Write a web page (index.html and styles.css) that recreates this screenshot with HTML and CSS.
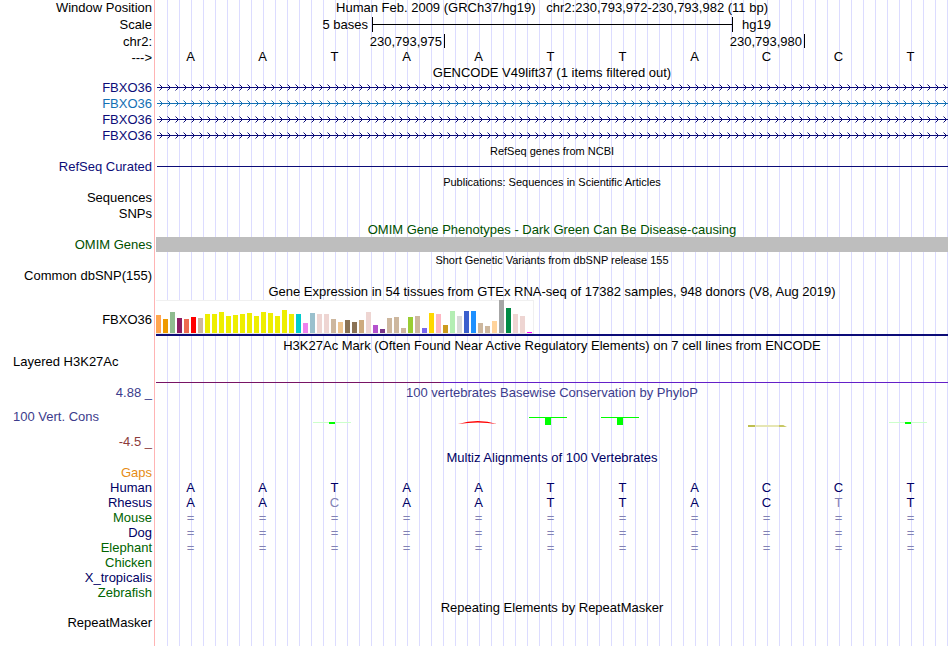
FILE: index.html
```html
<!DOCTYPE html>
<html lang="en">
<head>
  <meta charset="UTF-8" />
  <meta name="viewport" content="width=device-width, initial-scale=1.0" />
  <title>chr2:230,793,972-230,793,982 - Genome Browser</title>
  <link rel="stylesheet" href="styles.css">
</head>
<body>
  <!-- shared pattern for the strand arrows -->
  <svg class="defs" width="0" height="0">
    <defs>
      <pattern id="arrows" width="8" height="16" patternUnits="userSpaceOnUse">
        <path d="M3.5 4.5 L6.5 7.5 L3.5 10.5" fill="none" stroke="#0c0c78" />
      </pattern>
      <pattern id="arrowsBlue" width="8" height="16" patternUnits="userSpaceOnUse">
        <path d="M3.5 4.5 L6.5 7.5 L3.5 10.5" fill="none" stroke="#1470b4" />
      </pattern>
    </defs>
  </svg>

  <main class="browser">
    <div class="row">
      <div class="label">Window Position</div>
      <div class="track title">Human Feb. 2009 (GRCh37/hg19) &nbsp; chr2:230,793,972-230,793,982 (11 bp)</div>
    </div>
    <div class="row scale-row">
      <div class="label">Scale</div>
      <div class="track cells">
        <span class="scale-size">5 bases</span>
        <span class="scale-bar"></span>
        <span class="scale-db">hg19</span>
      </div>
    </div>
    <div class="row">
      <div class="label">chr2:</div>
      <div class="track cells">
        <span class="tick tick-first">230,793,975</span>
        <span class="tick tick-second">230,793,980</span>
      </div>
    </div>
    <div class="row">
      <div class="label">---&gt;</div>
      <div class="track cells bases ruler" data-bases="AATAATTACCT"></div>
    </div>

    <div class="row short">
      <div class="label"></div>
      <div class="track title">GENCODE V49lift37 (1 items filtered out)</div>
    </div>
    <div class="row">
      <div class="label navy">FBXO36</div>
      <div class="track"><svg class="gene navy"><rect class="line" x="1" y="7" width="100%" height="1" /><rect width="100%" height="16" fill="url(#arrows)" /></svg></div>
    </div>
    <div class="row">
      <div class="label blue">FBXO36</div>
      <div class="track"><svg class="gene blue"><rect class="line" x="1" y="7" width="100%" height="1" /><rect width="100%" height="16" fill="url(#arrowsBlue)" /></svg></div>
    </div>
    <div class="row">
      <div class="label navy">FBXO36</div>
      <div class="track"><svg class="gene navy"><rect class="line" x="1" y="7" width="100%" height="1" /><rect width="100%" height="16" fill="url(#arrows)" /></svg></div>
    </div>
    <div class="row">
      <div class="label navy">FBXO36</div>
      <div class="track"><svg class="gene navy"><rect class="line" x="1" y="7" width="100%" height="1" /><rect width="100%" height="16" fill="url(#arrows)" /></svg></div>
    </div>

    <div class="row tight">
      <div class="label"></div>
      <div class="track title small">RefSeq genes from NCBI</div>
    </div>
    <div class="row">
      <div class="label navy">RefSeq Curated</div>
      <div class="track"><svg class="gene navy"><rect class="line" x="1" y="7" width="100%" height="1" /></svg></div>
    </div>

    <div class="row tight">
      <div class="label"></div>
      <div class="track title small">Publications: Sequences in Scientific Articles</div>
    </div>
    <div class="row">
      <div class="label">Sequences</div>
      <div class="track"></div>
    </div>
    <div class="row">
      <div class="label">SNPs</div>
      <div class="track"></div>
    </div>

    <div class="row tight">
      <div class="label"></div>
      <div class="track title omim">OMIM Gene Phenotypes - Dark Green Can Be Disease-causing</div>
    </div>
    <div class="row tight">
      <div class="label omim">OMIM Genes</div>
      <div class="track omim-bar"></div>
    </div>

    <div class="row">
      <div class="label"></div>
      <div class="track title small">Short Genetic Variants from dbSNP release 155</div>
    </div>
    <div class="row">
      <div class="label">Common dbSNP(155)</div>
      <div class="track"></div>
    </div>

    <div class="row">
      <div class="label"></div>
      <div class="track title">Gene Expression in 54 tissues from GTEx RNA-seq of 17382 samples, 948 donors (V8, Aug 2019)</div>
    </div>
    <div class="row gtex-row">
      <div class="label">FBXO36</div>
      <div class="track">
        <div class="gtex" id="gtex"></div>
        <div class="gtex-gene"></div>
      </div>
    </div>

    <div class="row">
      <div class="label"></div>
      <div class="track title">H3K27Ac Mark (Often Found Near Active Regulatory Elements) on 7 cell lines from ENCODE</div>
    </div>
    <div class="row h3k-row">
      <div class="label left">Layered H3K27Ac</div>
      <div class="track"><div class="h3k-line"></div></div>
    </div>

    <div class="row">
      <div class="label phylo">4.88 _</div>
      <div class="track title phylo">100 vertebrates Basewise Conservation by PhyloP</div>
    </div>
    <div class="row phylo-row">
      <div class="label">
        <div class="left phylo">100 Vert. Cons</div>
        <div class="phylo-min">-4.5 _</div>
      </div>
      <div class="track cells">
        <svg class="logo col3" viewBox="0 0 40 30"><rect y="11" width="38" height="1" fill="#ccffcc" /><rect x="16" y="11" width="6" height="2" fill="#00ff00" /></svg>
        <svg class="logo col5" viewBox="0 0 40 30"><path d="M1 13 Q21 7 40 13 Q21 10 1 13Z" fill="#ff0000" /></svg>
        <svg class="logo col6" viewBox="0 0 40 30"><rect y="6" width="38" height="1" fill="#00ff00" /><rect x="16" y="6" width="6" height="8" fill="#00ff00" /></svg>
        <svg class="logo col7" viewBox="0 0 40 30"><rect y="6" width="38" height="1" fill="#00ff00" /><rect x="16" y="6" width="6" height="8" fill="#00ff00" /></svg>
        <svg class="logo col9" viewBox="0 0 40 30"><rect x="3" y="14" width="36" height="2" fill="#e6e6b4" /><rect x="3" y="14" width="7" height="2" fill="#bebe50" /><path d="M34 14 L38 14 L42 16 L34 16Z" fill="#c8c864" /></svg>
        <svg class="logo col11" viewBox="0 0 40 30"><rect y="11" width="38" height="1" fill="#ccffcc" /><rect x="16" y="11" width="6" height="2" fill="#00ff00" /></svg>
      </div>
    </div>

    <div class="row short">
      <div class="label"></div>
      <div class="track title human">Multiz Alignments of 100 Vertebrates</div>
    </div>
    <div class="row tight">
      <div class="label gaps">Gaps</div>
      <div class="track"></div>
    </div>
    <div class="row tight">
      <div class="label human">Human</div>
      <div class="track cells bases human" data-bases="AATAATTACCT"></div>
    </div>
    <div class="row tight">
      <div class="label human">Rhesus</div>
      <div class="track cells bases human" data-bases="AAcAATTACtT"></div>
    </div>
    <div class="row tight">
      <div class="label green">Mouse</div>
      <div class="track cells bases" data-bases="==========="></div>
    </div>
    <div class="row tight">
      <div class="label human">Dog</div>
      <div class="track cells bases" data-bases="==========="></div>
    </div>
    <div class="row tight">
      <div class="label green">Elephant</div>
      <div class="track cells bases" data-bases="==========="></div>
    </div>
    <div class="row tight">
      <div class="label green">Chicken</div>
      <div class="track"></div>
    </div>
    <div class="row tight">
      <div class="label human">X_tropicalis</div>
      <div class="track"></div>
    </div>
    <div class="row tight">
      <div class="label green">Zebrafish</div>
      <div class="track"></div>
    </div>

    <div class="row tight">
      <div class="label"></div>
      <div class="track title">Repeating Elements by RepeatMasker</div>
    </div>
    <div class="row last">
      <div class="label">RepeatMasker</div>
      <div class="track"></div>
    </div>
  </main>

  <script>
    // median expression per tissue: [height, color]
    const tissues = [
      [18, '#ffa54f'], [14, '#ee9a00'], [21, '#8fbc8f'], [15, '#8b1c62'], [14, '#ee6a50'], [16, '#ff0000'],
      [15, '#cdb79e'], [19, '#eeee00'], [19, '#eeee00'], [21, '#eeee00'], [17, '#eeee00'], [18, '#eeee00'],
      [19, '#eeee00'], [20, '#eeee00'], [17, '#eeee00'], [21, '#eeee00'], [20, '#eeee00'], [17, '#eeee00'],
      [23, '#eeee00'], [19, '#eeee00'], [19, '#00cdcd'], [10, '#ee82ee'], [20, '#9ac0cd'], [19, '#eed5d2'],
      [19, '#eed5d2'], [14, '#cdb79e'], [11, '#eec591'], [13, '#8b7355'], [11, '#8b7355'], [13, '#cdaa7d'],
      [21, '#eed5d2'], [8, '#b452cd'], [4, '#7a378b'], [15, '#cdb79e'], [16, '#cdb79e'], [5, '#cdb79e'],
      [16, '#9acd32'], [17, '#cdb79e'], [5, '#7a67ee'], [20, '#ffd700'], [19, '#ffb6c1'], [8, '#cd9b1d'],
      [22, '#b4eeb4'], [17, '#d9d9d9'], [22, '#3a5fcd'], [22, '#1e90ff'], [10, '#cdb79e'], [7, '#cdb79e'],
      [12, '#ffd39b'], [33, '#a6a6a6'], [25, '#008b45'], [19, '#eed5d2'], [17, '#eed5d2'], [1, '#ff00ff']
    ];
    const gtex = document.getElementById('gtex');
    tissues.forEach(([height, color]) => {
      const bar = document.createElement('span');
      bar.className = 'bar';
      bar.style.height = height + 'px';
      bar.style.background = color;
      gtex.appendChild(bar);
    });

    // lower case = differs from human
    document.querySelectorAll('.bases').forEach(track => {
      for (const base of track.dataset.bases) {
        const cell = document.createElement('span');
        cell.textContent = base.toUpperCase();
        if (base === '=' || base !== base.toUpperCase()) cell.className = 'faded';
        track.appendChild(cell);
      }
    });
  </script>
</body>
</html>
```
FILE: styles.css
```css
body {
  margin: 0;
  background: #fff;
  color: #000;
  font-family: "Liberation Sans", Arial, Helvetica, sans-serif;
  font-size: 13px;
  line-height: 16px;
}
.defs {
  position: absolute;
}
.browser {
  display: flex;
  flex-direction: column;
  min-height: 100vh;
}
.row {
  display: grid;
  grid-template-columns: 155px 1fr;
  min-height: 16px;
}
.row.tight {
  min-height: 15px;
  line-height: 15px;
}
.row.short {
  min-height: 14px;
  line-height: 14px;
}
.row.last {
  flex: 1;
}
.label {
  box-sizing: border-box;
  padding-right: 2px;
  border-right: 1px solid #ffb4b4;
  text-align: right;
  white-space: nowrap;
}
.left {
  padding-left: 13px;
  text-align: left;
}
/* 11 bases, 6 guide lines for each */
.track {
  margin: 0 2px 0 1px;
  background-image: linear-gradient(to left, #dcdcff 1px, transparent 1px);
  background-size: calc(100% / 66) 100%;
  white-space: nowrap;
}
.title {
  text-align: center;
}
.small {
  font-size: 11px;
}
.cells {
  display: grid;
  grid-template-columns: repeat(11, 1fr);
}

/* ruler */
.scale-row {
  line-height: 18px;
}
.scale-size {
  grid-column: 1 / 4;
  padding-right: 4px;
  text-align: right;
}
.scale-bar {
  grid-column: 4 / 9;
  height: 15px;
  margin: 1px -1px 0 0;
  border: solid #000;
  border-width: 0 1px;
  background: linear-gradient(#000, #000) 0 7px / 100% 1px no-repeat;
}
.scale-db {
  grid-column: 9 / 12;
  padding-left: 10px;
}
.tick {
  height: 14px;
  margin-right: -1px;
  padding-right: 2px;
  border-right: 1px solid #000;
  text-align: right;
}
.tick-first {
  grid-column: 1 / 5;
}
.tick-second {
  grid-column: 5 / 10;
}
.bases span {
  padding-right: 3px;
  text-align: center;
}
.ruler {
  line-height: 14px;
}

/* genes */
.gene {
  display: block;
  width: 100%;
  height: 16px;
}
.gene .line {
  fill: currentColor;
}
.navy {
  color: #0c0c78;
}
.blue {
  color: #1470b4;
}
.omim {
  color: #005000;
}
.omim-bar {
  background: #bebebe;
}

/* expression */
.gtex-row {
  min-height: 38px;
}
.gtex-row .label {
  padding-top: 12px;
}
.gtex {
  display: flex;
  align-items: flex-end;
  gap: 2px;
  width: 376px;
  height: 33px;
  padding-right: 2px;
  background: #fff;
  box-shadow: inset 0 1px #f0f0f0, inset -1px 0 #f0f0f0, 0 1px #e6e6e6;
}
.bar {
  width: 5px;
}
.gtex-gene {
  height: 2px;
  margin-top: 1px;
  background: #0c0c78;
}

/* regulation and conservation */
.h3k-row {
  min-height: 31px;
}
.h3k-line {
  height: 1px;
  margin-top: 28px;
  background: linear-gradient(to right, #781464 36%, #6420c8 36%);
}
.phylo {
  color: #3c3c8c;
}
.phylo-min {
  color: #8c3c3c;
}
.phylo-row {
  min-height: 50px;
}
.phylo-row .label {
  display: flex;
  flex-direction: column;
  gap: 9px;
  padding-top: 8px;
}
.logo {
  width: 40px;
  height: 30px;
  margin: 10px 0 0 13px;
  overflow: visible;
}
.col3 { grid-column: 3; }
.col5 { grid-column: 5; }
.col6 { grid-column: 6; }
.col7 { grid-column: 7; }
.col9 { grid-column: 9; }
.col11 { grid-column: 11; }

/* alignments */
.human {
  color: #000064;
}
.green {
  color: #006400;
}
.gaps {
  color: #e68c14;
}
.faded {
  color: #8282b4;
}
```
